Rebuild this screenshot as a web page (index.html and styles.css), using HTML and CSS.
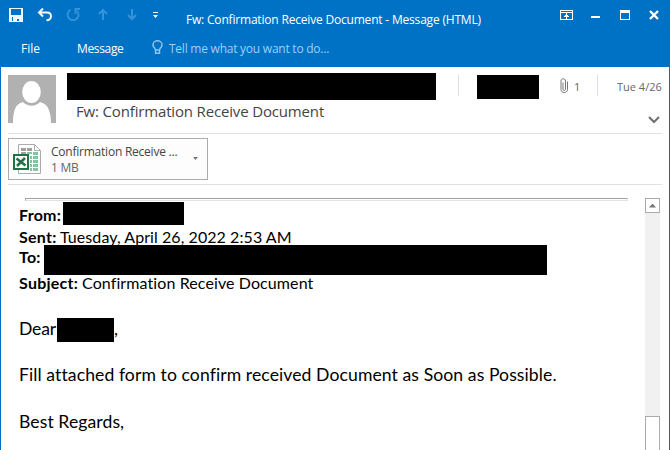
FILE: index.html
```
<!DOCTYPE html>
<html lang="en">
<head>
<meta charset="utf-8">
<title>Fw: Confirmation Receive Document - Message (HTML)</title>
<link rel="stylesheet" href="styles.css">
</head>
<body>
<div class="window">
  <header class="chrome">
    <div class="titlebar">
      <svg class="quick" width="160" height="30" viewBox="0 0 160 30" fill="none">
        <path d="M9 8h14v14H9z M11 9v6h10V9z M12 17v4h1v-4z M17 19v2h2v-2z" fill="#f2f6fa" fill-rule="evenodd"/>
        <path d="M43 8.500l-4 4 4 4M39.500 12.500H47c3 0 4 2 4 3.800s-1.500 4-4.500 4" stroke="#f2f6fa" stroke-width="2"/>
        <path d="M70.500 9.800a5.500 5.500 0 1 0 6.500 1M80 9h-4.500v5" stroke="#3693d8" stroke-width="1.800"/>
        <path d="M103 20V10M99 14l4-4 4 4M132 9v10M128 15l4 4 4-4" stroke="#3693d8" stroke-width="2"/>
        <path d="M153 12h5v1h-5zM153 15h5l-2.500 3z" fill="#fff"/>
      </svg>
      <div class="title"><span class="t">Fw: Confirmation Receive Document - Message (HTML)</span></div>
      <svg class="controls" width="110" height="30" viewBox="560 0 110 30" fill="none" stroke="#fff" shape-rendering="crispEdges">
        <path d="M560.500 10.500h12v9h-12zM560 12.500h13M566.500 13v6M565 15.500h3M564 16.500h5"/>
        <path d="M591 17h9" stroke-width="2"/>
        <path d="M620.500 10.500h9v9h-9zM620 12h10M620 11h10"/>
        <path d="M650 11l8 8M658 11l-8 8" stroke-width="2.400" shape-rendering="auto"/>
      </svg>
    </div>
    <nav class="tabs">
      <span class="t file">File</span>
      <span class="t message">Message</span>
      <svg class="bulb" width="11" height="15" viewBox="0 0 11 15" fill="none" stroke="#8dc4ee" stroke-width="1.500"><path d="M3.500 10C3.500 8 1 7.500 1 4.900a4.500 4.200 0 0 1 9 0C10 7.500 7.500 8 7.500 10zM3.500 10v3.300h4V10"/></svg>
      <span class="t tell">Tell me what you want to do...</span>
    </nav>
  </header>
  <section class="summary">
    <svg class="avatar" width="48" height="48" viewBox="0 0 48 48"><path fill="#b1b1b1" d="M0 0h48v48H0z"/><path fill="#fff" d="M5 48c0-6 .500-10 2-14 1.500-4 4-6 8-7 5 5 12 5 17 0 4 1 7 3 8.500 7 1.500 4 2.500 8 2.500 14z"/><ellipse cx="23.500" cy="17" rx="10" ry="12" fill="#b1b1b1"/><ellipse cx="23.500" cy="17" rx="9.300" ry="11" fill="#fff"/></svg>
    <div class="sender">
      <div class="bar bar-sender"></div>
      <h1 class="t">Fw: Confirmation Receive Document</h1>
    </div>
    <div class="meta">
      <i class="rule"></i>
      <div class="bar bar-category"></div>
      <svg class="clip" width="9" height="16" viewBox="0 0 9 16" fill="none" stroke="#777"><path d="M3 4.500v6.700c0 1.700 2.500 1.700 2.500 0V3c0-3-4.500-3-4.500 0v8.500c0 4 6.500 4 6.500 0V3.500"/></svg>
      <span class="t count">1</span>
      <i class="rule"></i>
      <span class="t date">Tue 4/26</span>
      <svg class="expand" width="12" height="8" viewBox="0 0 12 8" fill="none" stroke="#6f6f6f" stroke-width="2"><path d="M1 1l5 5 5-5"/></svg>
    </div>
  </section>
  <section class="attachments">
    <div class="attachment">
      <svg width="29" height="31" viewBox="0 0 29 31" fill="none">
        <path d="M5.500.500h16l6 6v23h-22z" fill="#fff" stroke="#ababab"/><path d="M21.500.500v6h6" stroke="#ababab"/>
        <path d="M8 4h5v3H8zM14 4h5v3h-5zM8 8h5v2H8z" fill="#a0a0a0"/>
        <path d="M14 8h5v2h-5zM20 8h5v3h-5zM17 12h2v3h-2zM20 12h5v3h-5zM17 16h2v3h-2zM20 16h5v3h-5zM17 20h2v3h-2zM20 20h5v3h-5zM17 24h2v3h-2zM20 24h5v3h-5z" fill="#86c3a0"/>
        <path d="M0 10h16v16H0z" fill="#217346"/><path d="M2 12h12v12H2z" fill="#fff"/>
        <path d="M3.500 14.500l9 7M12 14l-8 8" stroke="#217346" stroke-width="2.500"/>
      </svg>
      <div class="file-info">
        <span class="t name">Confirmation Receive ...</span>
        <span class="t size">1 MB</span>
      </div>
      <i class="caret"></i>
    </div>
  </section>
  <main class="reading">
    <article class="mail">
      <hr>
      <p class="from"><b class="t">From:</b><span class="bar bar-from"></span></p>
      <p class="sent"><b class="t">Sent:</b><span class="t">Tuesday, April 26, 2022 2:53 AM</span></p>
      <p class="to"><b class="t">To:</b><span class="bar bar-to"></span></p>
      <p class="subject"><b class="t">Subject:</b><span class="t">Confirmation Receive Document</span></p>
      <p class="text dear"><span class="t">Dear</span><span class="bar bar-name"></span><span class="t">,</span></p>
      <p class="text fill"><span class="t">Fill attached form to confirm received Document as Soon as Possible.</span></p>
      <p class="text regards"><span class="t">Best Regards,</span></p>
    </article>
    <div class="scrollbar"><div class="up"></div><div class="track"></div><div class="thumb"></div></div>
  </main>
</div>
</body>
</html>
```
FILE: styles.css
```
* { box-sizing: border-box; }
body { margin: 0; background: #fff; font-family: "Open Sans", "Noto Sans", sans-serif; font-size: 12px; color: #444; font-variant-ligatures: none; }
svg { display: block; flex: none; }
.t { white-space: nowrap; }
.window { width: 670px; height: 450px; overflow: hidden; display: flex; flex-direction: column; border: solid #0072c6; border-width: 0 1px; }
.chrome { height: 67px; margin: 0 -1px; flex: none; background: #0072c6; color: #fff; }
.titlebar { height: 33px; display: flex; }
.title { width: 400px; padding-left: 26px; line-height: 39px; letter-spacing: -.19px; }
.tabs { height: 34px; display: flex; line-height: 32px; padding-left: 21px; letter-spacing: -.24px; }
.file { width: 56px; letter-spacing: 0; }
.message { width: 75px; letter-spacing: -.35px; }
.bulb { margin: 7px 6px 0 0; }
.tell { color: #9dd0f5; }
.summary { height: 67px; margin: 0 7px; display: flex; flex: none; padding-top: 6px; border-bottom: 1px solid #e1e1e1; }
.avatar { margin-top: 2px; }
.bar { background: #000; display: block; flex: none; }
.sender { width: 391px; margin-left: 11px; }
.bar-sender { width: 369px; height: 27px; }
h1 { margin: 0 0 0 9px; font-weight: 400; font-size: 15px; line-height: 23px; letter-spacing: -.16px; }
.meta { flex: 1; display: grid; grid-template-columns: 19px 84px 13px 23px 20px 1fr; grid-template-rows: 24px 1fr; padding-top: 2px; color: #666; font-size: 11px; line-height: 24px; }
.rule { width: 1px; height: 21px; background: #e1e1e1; }
.bar-category { width: 62px; height: 24px; }
.clip { margin-top: 3px; margin-left: -1px; }
.expand { grid-column: 6; justify-self: end; margin: 17px 2px 0 0; }
.attachments { height: 51px; margin: 0 7px; padding-top: 4px; flex: none; border-bottom: 1px solid #e1e1e1; }
.attachment { width: 200px; height: 42px; border: 1px solid #ababab; background: #fdfdfd; display: flex; padding: 5px 8px 0 4px; }
.file-info { width: 142px; margin-left: 9px; display: flex; flex-direction: column; line-height: 16px; letter-spacing: -.23px; }
.size { color: #666; }
.caret { margin-top: 13px; width: 5px; height: 3px; background: #777; clip-path: polygon(0 0, 100% 0, 50% 100%); }
.reading { flex: 1; min-height: 0; display: flex; padding: 13px 8px 0 18px; font-family: Lato, sans-serif; font-size: 16px; color: #000; }
.mail { width: 626px; }
hr { width: 603px; height: 3px; margin: 0 0 0 6px; border: 1px solid; border-color: #a0a0a0 #e3e3e3 #e3e3e3 #a0a0a0; }
p { margin: 0; display: flex; align-items: flex-start; line-height: 22px; }
b { letter-spacing: .25px; }
.from { height: 25px; padding-top: 4px; }
.from b { margin-top: -1px; width: 44px; }
.bar-from { width: 121px; height: 23px; margin-top: -3px; }
.sent { height: 19px; letter-spacing: .07px; }
.to { height: 30px; }
.to b { margin-top: 1px; width: 25px; }
.bar-to { width: 503px; height: 30px; }
.subject { height: 43px; margin-top: -3px; letter-spacing: .1px; }
.text { height: 47px; font-size: 17.6px; line-height: 24px; letter-spacing: .08px; }
.dear { margin-top: 2px; height: 46px; }
.bar-name { width: 57px; height: 24px; margin-top: 1px; }
.sent b { width: 41px; }
.subject b { width: 63px; }
.dear .t:first-child { width: 38px; letter-spacing: -.2px; }
.scrollbar { width: 15px; display: flex; flex-direction: column; }
.up { height: 15px; border: 1px solid #ababab; display: grid; place-items: center; }
.up::after { content: ""; width: 7px; height: 4px; background: #777; clip-path: polygon(50% 0, 100% 100%, 0 100%); }
.track { flex: 1; background: #f1f1f1; }
.thumb { height: 34px; border: 1px solid #ababab; border-bottom: 0; }
```
